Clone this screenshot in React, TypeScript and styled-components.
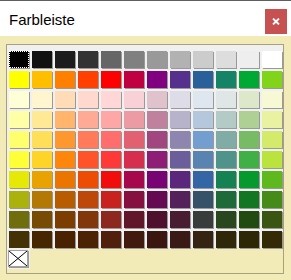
import React from "react";
import styled, { createGlobalStyle } from "styled-components";

// LibreOffice "standard" palette, 12 columns x 10 rows
const palette: string[][] = [
  ["#000000", "#111111", "#1c1c1c", "#333333", "#666666", "#808080", "#999999", "#b2b2b2", "#cccccc", "#dddddd", "#eeeeee", "#ffffff"],
  ["#ffff00", "#ffbf00", "#ff8000", "#ff4000", "#ff0000", "#bf0041", "#800080", "#55308d", "#2a6099", "#158466", "#00a933", "#81d41a"],
  ["#ffffd7", "#fff5ce", "#ffdbb6", "#ffd8ce", "#ffd7d7", "#f7d1d5", "#e0c2cd", "#dedce6", "#dee6ef", "#dee7e5", "#dde8cb", "#f6f9d4"],
  ["#ffffa6", "#ffe994", "#ffb66c", "#ffaa95", "#ffa6a6", "#ec9ba4", "#bf819e", "#b7b3ca", "#b4c7dc", "#b3cac7", "#afd095", "#e8f2a1"],
  ["#ffff6d", "#ffde59", "#ff972f", "#ff7b59", "#ff6d6d", "#e16173", "#a1467e", "#8e86ae", "#729fcf", "#81aca6", "#77bc65", "#d4ea6b"],
  ["#ffff38", "#ffd428", "#ff860d", "#ff5429", "#ff3838", "#d62e4e", "#8d1d75", "#6b5e9b", "#5983b0", "#50938a", "#3faf46", "#bbe33d"],
  ["#e6e905", "#e8a202", "#ea7500", "#ed4c05", "#f10d0c", "#a7074b", "#780373", "#5b277d", "#3465a4", "#168253", "#069a2e", "#5eb91e"],
  ["#acb20c", "#b47804", "#b85c00", "#be480a", "#c9211e", "#861141", "#650953", "#55215b", "#355269", "#1e6a39", "#127622", "#468a1a"],
  ["#706e0c", "#784b04", "#7b3d00", "#813709", "#8d281e", "#611729", "#4e102d", "#481d32", "#383d3c", "#28471f", "#224b12", "#395511"],
  ["#443205", "#472702", "#492300", "#4b2204", "#50200c", "#41190d", "#3b160e", "#3a1a14", "#362413", "#302709", "#2e2706", "#342a06"],
];

const GlobalStyle = createGlobalStyle`
  html, body {
    margin: 0;
    padding: 0;
    background: #f2ebb7;
  }
`;

const Window = styled.div`
  width: 291px;
  height: 280px;
  display: flex;
  flex-direction: column;
  background: #f2ebb7;
  font-family: "Liberation Sans", Arial, sans-serif;
  overflow: hidden;
`;

const TitleBar = styled.div`
  height: 36px;
  box-sizing: border-box;
  display: flex;
  align-items: flex-start;
  background: #ffffff;
  border-top: 1px solid #5f5f5f;
`;

const Title = styled.span`
  margin: 10px 0 0 9px;
  font-size: 15px;
  line-height: 18px;
  color: #000000;
`;

const CloseButton = styled.div`
  margin: 8px 4px 0 auto;
  width: 22px;
  height: 25px;
  display: flex;
  align-items: center;
  justify-content: center;
  background: #c75050;
`;

const Body = styled.div`
  flex: 1;
  padding: 8px 7px 0 6px;
`;

const Frame = styled.div`
  height: 230px;
  box-sizing: border-box;
  border: 1px solid #a5a27d;
  display: flex;
  flex-direction: column;
  align-items: flex-start;
`;

const SwatchGrid = styled.div`
  align-self: stretch;
  display: grid;
  grid-template-columns: repeat(12, 20px);
  grid-auto-rows: 17px;
  gap: 3px;
  padding: 6px 1px 0 2px;
  height: 203px;
  box-sizing: border-box;
  background: #f0f0f0;
`;

const NoneRow = styled.div`
  padding: 2px 2px 2px 1px;
  background: #f0f0f0;
`;

const Swatch = styled.div<{ $color: string; $selected?: boolean }>`
  width: 20px;
  height: 17px;
  box-sizing: border-box;
  background: ${(p) => p.$color};
  box-shadow: 1px 1px 0 #999999;
  ${(p) => (p.$selected ? "outline: 1px dotted #ffffff; outline-offset: -1px;" : "")}
`;

const NoneSwatch = styled.div`
  width: 20px;
  height: 17px;
  box-sizing: border-box;
  background: #ffffff;
  border: 1px solid #a0a0a0;
  box-shadow: 1px 1px 0 #999999;

  svg {
    display: block;
  }
`;

export default function App() {
  return (
    <>
      <GlobalStyle />
      <Window>
        <TitleBar>
          <Title>Farbleiste</Title>
          <CloseButton>
            <svg width="8" height="7" viewBox="0 0 8 7">
              <path d="M1 0.5 L7 6.5 M7 0.5 L1 6.5" stroke="#ffffff" strokeWidth="1.8" />
            </svg>
          </CloseButton>
        </TitleBar>
        <Body>
          <Frame>
            <SwatchGrid>
              {palette.flatMap((row, r) =>
                row.map((c, i) => (
                  <Swatch key={`${r}-${i}`} $color={c} $selected={r === 0 && i === 0} />
                ))
              )}
            </SwatchGrid>
            <NoneRow>
              <NoneSwatch>
                <svg width="18" height="15" viewBox="0 0 18 15">
                  <path d="M0 0 L18 15 M18 0 L0 15" stroke="#000000" strokeWidth="1" />
                </svg>
              </NoneSwatch>
            </NoneRow>
          </Frame>
        </Body>
      </Window>
    </>
  );
}
